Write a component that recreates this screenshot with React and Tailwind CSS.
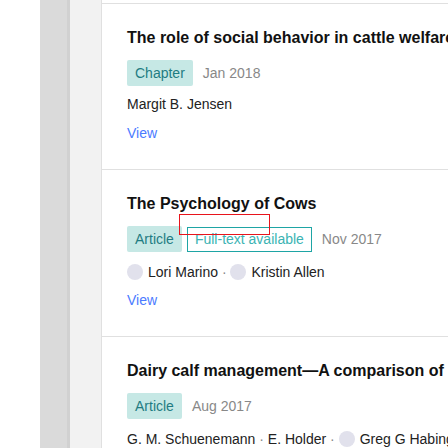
import React from "react";

const font = { fontFamily: '"Liberation Sans", Arial, sans-serif' };

function Sep() {
  return <span className="text-[#888] whitespace-pre"> · </span>;
}

function Author({ name, avatar }) {
  return (
    <span className="flex items-center whitespace-nowrap">
      {avatar && <span className="w-4 h-4 rounded-full bg-[#e1e1ec] mr-[5px] shrink-0" />}
      <span>{name}</span>
    </span>
  );
}

function Item({ title, type, fulltext, date, authors, avatarRow }) {
  return (
    <div className="border-t border-[#e0e0e0] pl-[25px] pt-6 pb-[26px]">
      <div className="text-[16px] leading-5 font-bold text-[#111] whitespace-nowrap">{title}</div>
      <div className="mt-3 flex items-center text-[14px] whitespace-nowrap">
        <span className="h-[26px] leading-[26px] px-2 bg-[#c6e8e5] text-[#1f7c82] rounded-[2px] mr-[5px]">{type}</span>
        {fulltext && (
          <span className="h-[25px] leading-[23px] px-[7px] border border-[#1ea5a5] text-[#3bb3b3] mr-[5px]">
            Full-text available
          </span>
        )}
        <span className="ml-[5px] text-[#888]">{date}</span>
      </div>
      {authors && (
        <div
          className={
            "flex items-center text-[14px] leading-5 h-5 text-[#222] whitespace-nowrap " +
            (avatarRow ? "mt-[10px]" : "mt-2")
          }
        >
          {authors}
        </div>
      )}
      <div className={"text-[14px] leading-5 text-[#4b7bff] " + (avatarRow ? "mt-2" : "mt-[9px]")}>View</div>
    </div>
  );
}

export default function App() {
  return (
    <div className="w-[448px] h-[448px] overflow-hidden bg-white flex relative" style={font}>
      <div className="w-[40px] shrink-0 bg-white" />
      <div className="w-[30px] shrink-0 bg-[#dadada] border-r-[3px] border-[#d1d1d1]" />
      <div className="w-[32px] shrink-0 bg-[#f2f2f2] border-r border-[#e0e0e0]" />
      <div className="flex-1 min-w-0 pt-[3px] bg-white">
        <Item
          title="The role of social behavior in cattle welfare"
          type="Chapter"
          date="Jan 2018"
          authors={<Author name="Margit B. Jensen" />}
        />
        <Item
          title="The Psychology of Cows"
          type="Article"
          fulltext
          date="Nov 2017"
          avatarRow
          authors={
            <>
              <Author name="Lori Marino" avatar />
              <Sep />
              <Author name="Kristin Allen" avatar />
            </>
          }
        />
        <Item
          title="Dairy calf management—A comparison of practices and producer attitudes"
          type="Article"
          date="Aug 2017"
          avatarRow
          authors={
            <>
              <Author name="G. M. Schuenemann" />
              <Sep />
              <Author name="E. Holder" />
              <Sep />
              <Author name="Greg G Habing" avatar />
            </>
          }
        />
      </div>
      <div className="absolute left-[179px] top-[214px] w-[91px] h-[21px] border border-[#e8141c] pointer-events-none" />
    </div>
  );
}
